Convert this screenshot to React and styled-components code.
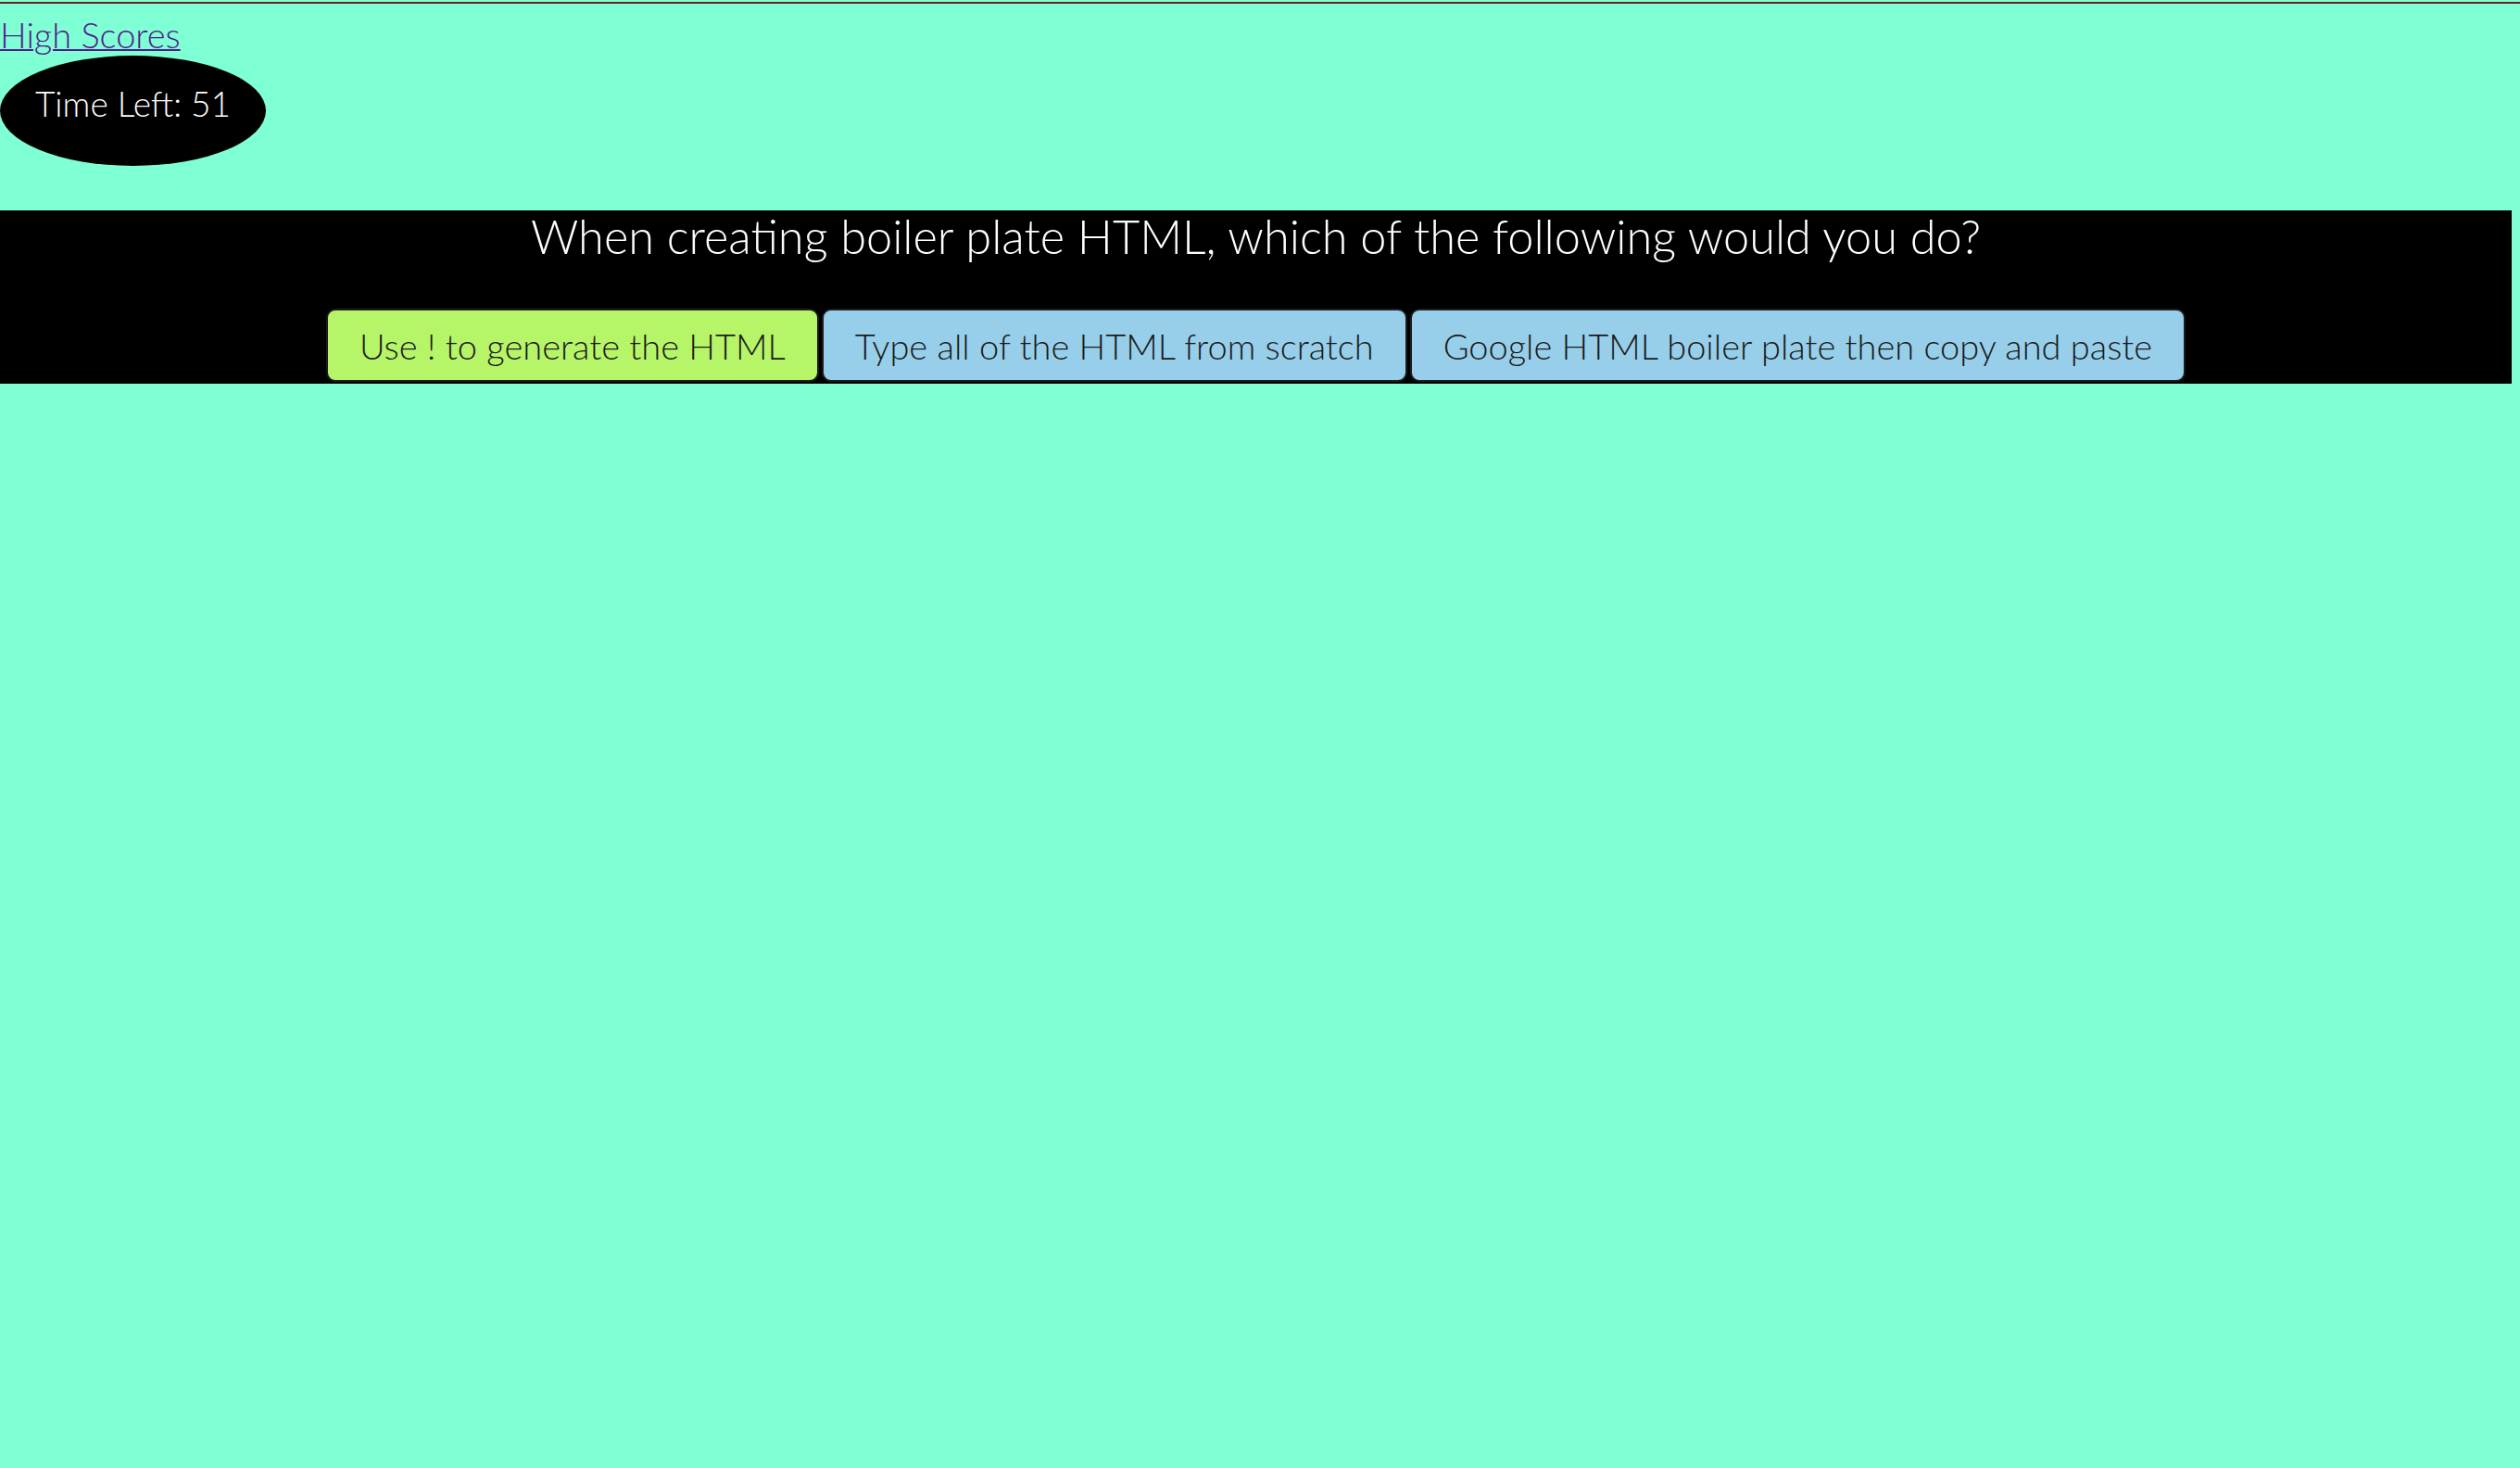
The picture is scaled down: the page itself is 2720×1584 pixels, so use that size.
import React from "react";
import styled, { createGlobalStyle } from "styled-components";

const GlobalStyle = createGlobalStyle`
  body {
    margin: 0;
    background: #7fffd4;
    font-family: "Lato", "Open Sans", sans-serif;
    font-weight: 300;
  }
`;

const TopRule = styled.div`
  margin-top: 2px;
  height: 2px;
  background: #6b1d1d;
`;

const ScoresLink = styled.a`
  display: inline-block;
  margin-top: 12px;
  font-size: 38px;
  line-height: 42px;
  color: #551a8b;
  text-decoration: underline;
  text-decoration-thickness: 2px;
`;

const Timer = styled.div`
  width: 287px;
  height: 119px;
  margin-top: 2px;
  border-radius: 50%;
  background: #000;
  color: #fff;
  display: flex;
  align-items: center;
  justify-content: center;
  padding-bottom: 16px;
  box-sizing: border-box;
  font-size: 37px;
`;

const QuestionBand = styled.section`
  margin-top: 48px;
  margin-right: 9px;
  height: 187px;
  background: #000;
  display: flex;
  flex-direction: column;
  align-items: center;
`;

const Question = styled.h2`
  margin: 0;
  font-size: 50.5px;
  font-weight: 300;
  line-height: 56px;
  color: #fff;
`;

const Choices = styled.div`
  margin-top: 50px;
  display: flex;
  gap: 3px;
`;

const Choice = styled.button`
  height: 79px;
  padding: 0 34px;
  border: 2px solid #1c1c1c;
  border-radius: 10px;
  background: ${(p) => (p.$correct ? "#b7f568" : "#97cfea")};
  color: #1a1a1a;
  font-family: inherit;
  font-weight: 300;
  font-size: 38px;
`;

export default function App() {
  return (
    <>
      <GlobalStyle />
      <TopRule />
      <ScoresLink href="#highscores">High Scores</ScoresLink>
      <Timer>Time Left: 51</Timer>
      <QuestionBand>
        <Question>When creating boiler plate HTML, which of the following would you do?</Question>
        <Choices>
          <Choice $correct>Use ! to generate the HTML</Choice>
          <Choice>Type all of the HTML from scratch</Choice>
          <Choice>Google HTML boiler plate then copy and paste</Choice>
        </Choices>
      </QuestionBand>
    </>
  );
}
